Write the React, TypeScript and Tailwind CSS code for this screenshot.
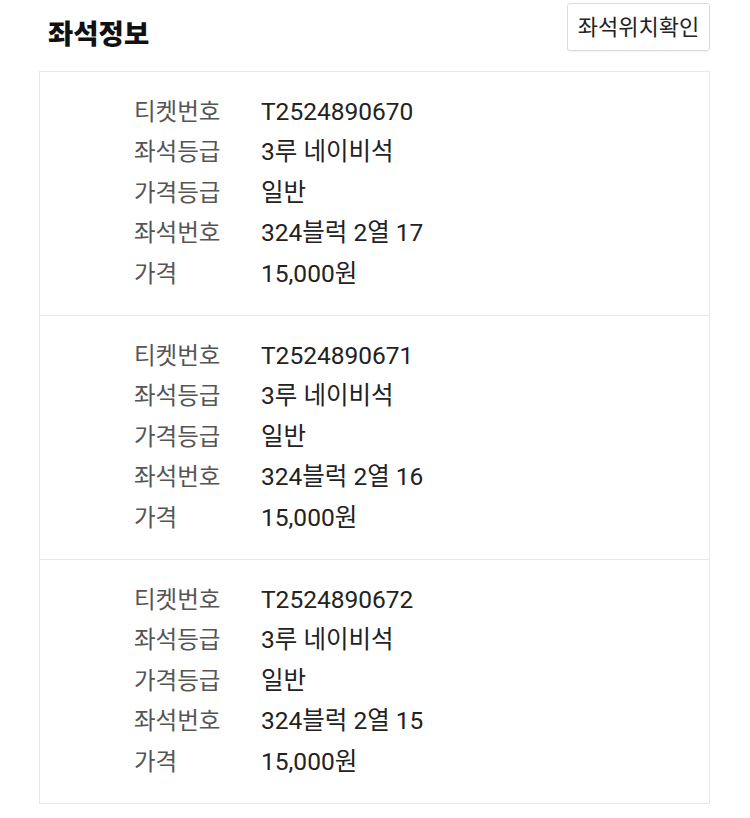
import React from "react";

const tickets = [
  { no: "T2524890670", seat: "324블럭 2열 17" },
  { no: "T2524890671", seat: "324블럭 2열 16" },
  { no: "T2524890672", seat: "324블럭 2열 15" },
];

export default function App() {
  return (
    <div
      className="w-[750px] min-h-[818px] bg-white"
      style={{ fontFamily: 'Roboto, "Noto Sans CJK KR", sans-serif' }}
    >
      <div className="flex items-start justify-between pt-[3px] pl-[48px] pr-[40px]">
        <h2 className="mt-[15.5px] text-[27.5px] leading-[32px] font-black text-[#111]">좌석정보</h2>
        <button className="h-[48px] w-[143px] rounded-[3px] border border-[#dcdcdc] bg-white text-[22px] text-[#222] shadow-[0_1px_1px_rgba(0,0,0,0.05)]">
          좌석위치확인
        </button>
      </div>
      <div className="mt-[20px] ml-[39px] mr-[40px] border border-[#e8e8e8]">
        {tickets.map((t, i) => (
          <div
            key={t.no}
            className={`pt-[20px] pb-[20.5px] pl-[94px] ${i > 0 ? "border-t border-[#e8e8e8]" : ""}`}
          >
            {[
              ["티켓번호", t.no],
              ["좌석등급", "3루 네이비석"],
              ["가격등급", "일반"],
              ["좌석번호", t.seat],
              ["가격", "15,000원"],
            ].map(([k, v]) => (
              <div key={k} className="flex h-[40.5px] items-center">
                <div className="w-[127px] text-[23.5px] text-[#555]">{k}</div>
                <div className="text-[24.5px] text-[#222]">{v}</div>
              </div>
            ))}
          </div>
        ))}
      </div>
    </div>
  );
}
